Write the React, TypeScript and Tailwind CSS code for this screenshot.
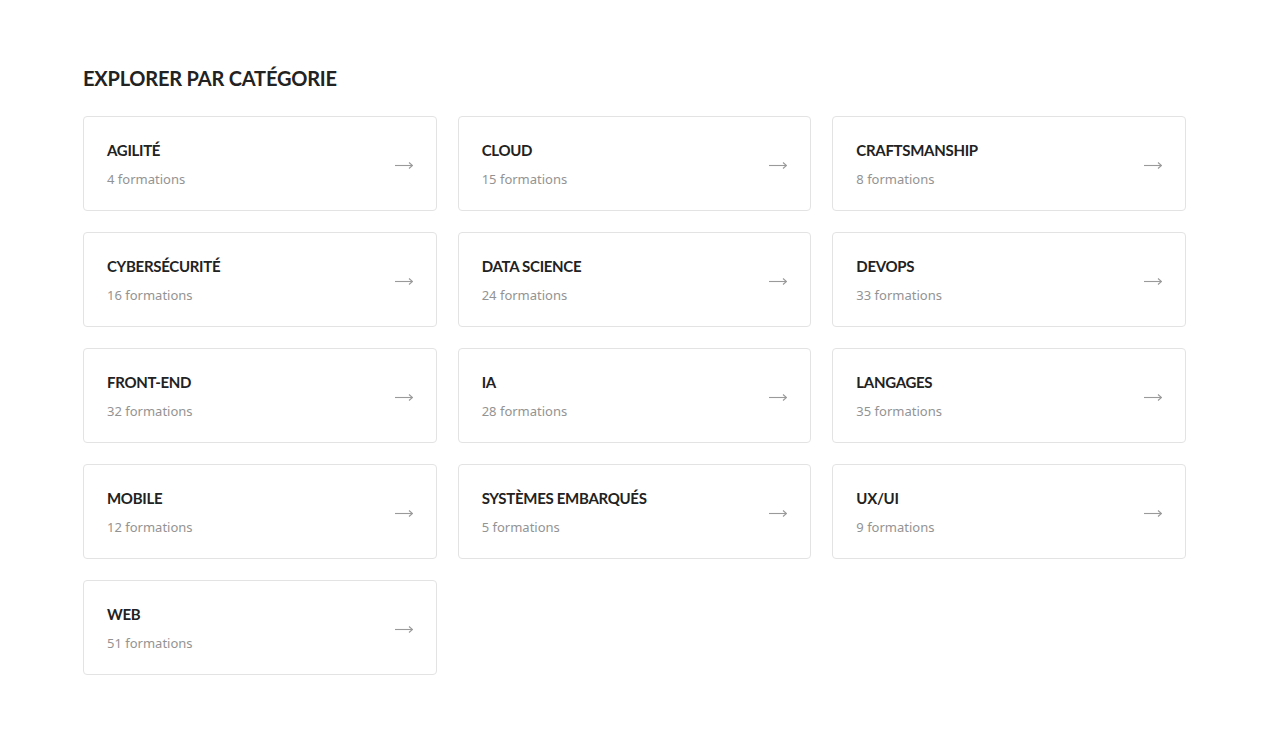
import React from 'react';

interface Category {
  name: string;
  count: number;
}

const categories: Category[] = [
  { name: 'Agilité', count: 4 },
  { name: 'Cloud', count: 15 },
  { name: 'Craftsmanship', count: 8 },
  { name: 'Cybersécurité', count: 16 },
  { name: 'Data Science', count: 24 },
  { name: 'DevOps', count: 33 },
  { name: 'Front-End', count: 32 },
  { name: 'IA', count: 28 },
  { name: 'Langages', count: 35 },
  { name: 'Mobile', count: 12 },
  { name: 'Systèmes embarqués', count: 5 },
  { name: 'UX/UI', count: 9 },
  { name: 'Web', count: 51 },
];

const Arrow = () => (
  <svg width="18" height="9" viewBox="0 0 18 9" fill="none" className="text-[#9a9a9a]">
    <path d="M0 4.5H17.5" stroke="currentColor" strokeWidth="1.1" />
    <path d="M14 1.5L17.5 4.5L14 7.5" stroke="currentColor" strokeWidth="1.1" />
  </svg>
);

const CategoryCard: React.FC<{ category: Category }> = ({ category }) => (
  <a
    href="#"
    className="flex items-center justify-between h-[95px] pl-[23px] pr-[23px] border border-[#e3e3e3] rounded-[4px] bg-white hover:border-[#bbb] transition-colors"
  >
    <div className="flex flex-col">
      <span className="font-['Lato',sans-serif] font-bold uppercase text-[15px] leading-[22px] text-[#222] tracking-[-0.3px]">
        {category.name}
      </span>
      <span className="mt-[8px] font-['Noto_Sans',sans-serif] text-[13px] leading-[20px] text-[#939393]">
        {category.count} formations
      </span>
    </div>
    <div className="mt-[3px]">
      <Arrow />
    </div>
  </a>
);

export default function App() {
  return (
    <div className="min-h-screen bg-white">
      <section className="w-[1103px] ml-[83px] pt-[64px] pb-[72px]">
        <h2 className="font-['Lato',sans-serif] font-bold uppercase text-[20px] leading-[28px] text-[#222] tracking-[-0.2px] mb-[24px]">
          Explorer par catégorie
        </h2>
        <div className="grid grid-cols-3 gap-[21px]">
          {categories.map((c) => (
            <CategoryCard key={c.name} category={c} />
          ))}
        </div>
      </section>
    </div>
  );
}
